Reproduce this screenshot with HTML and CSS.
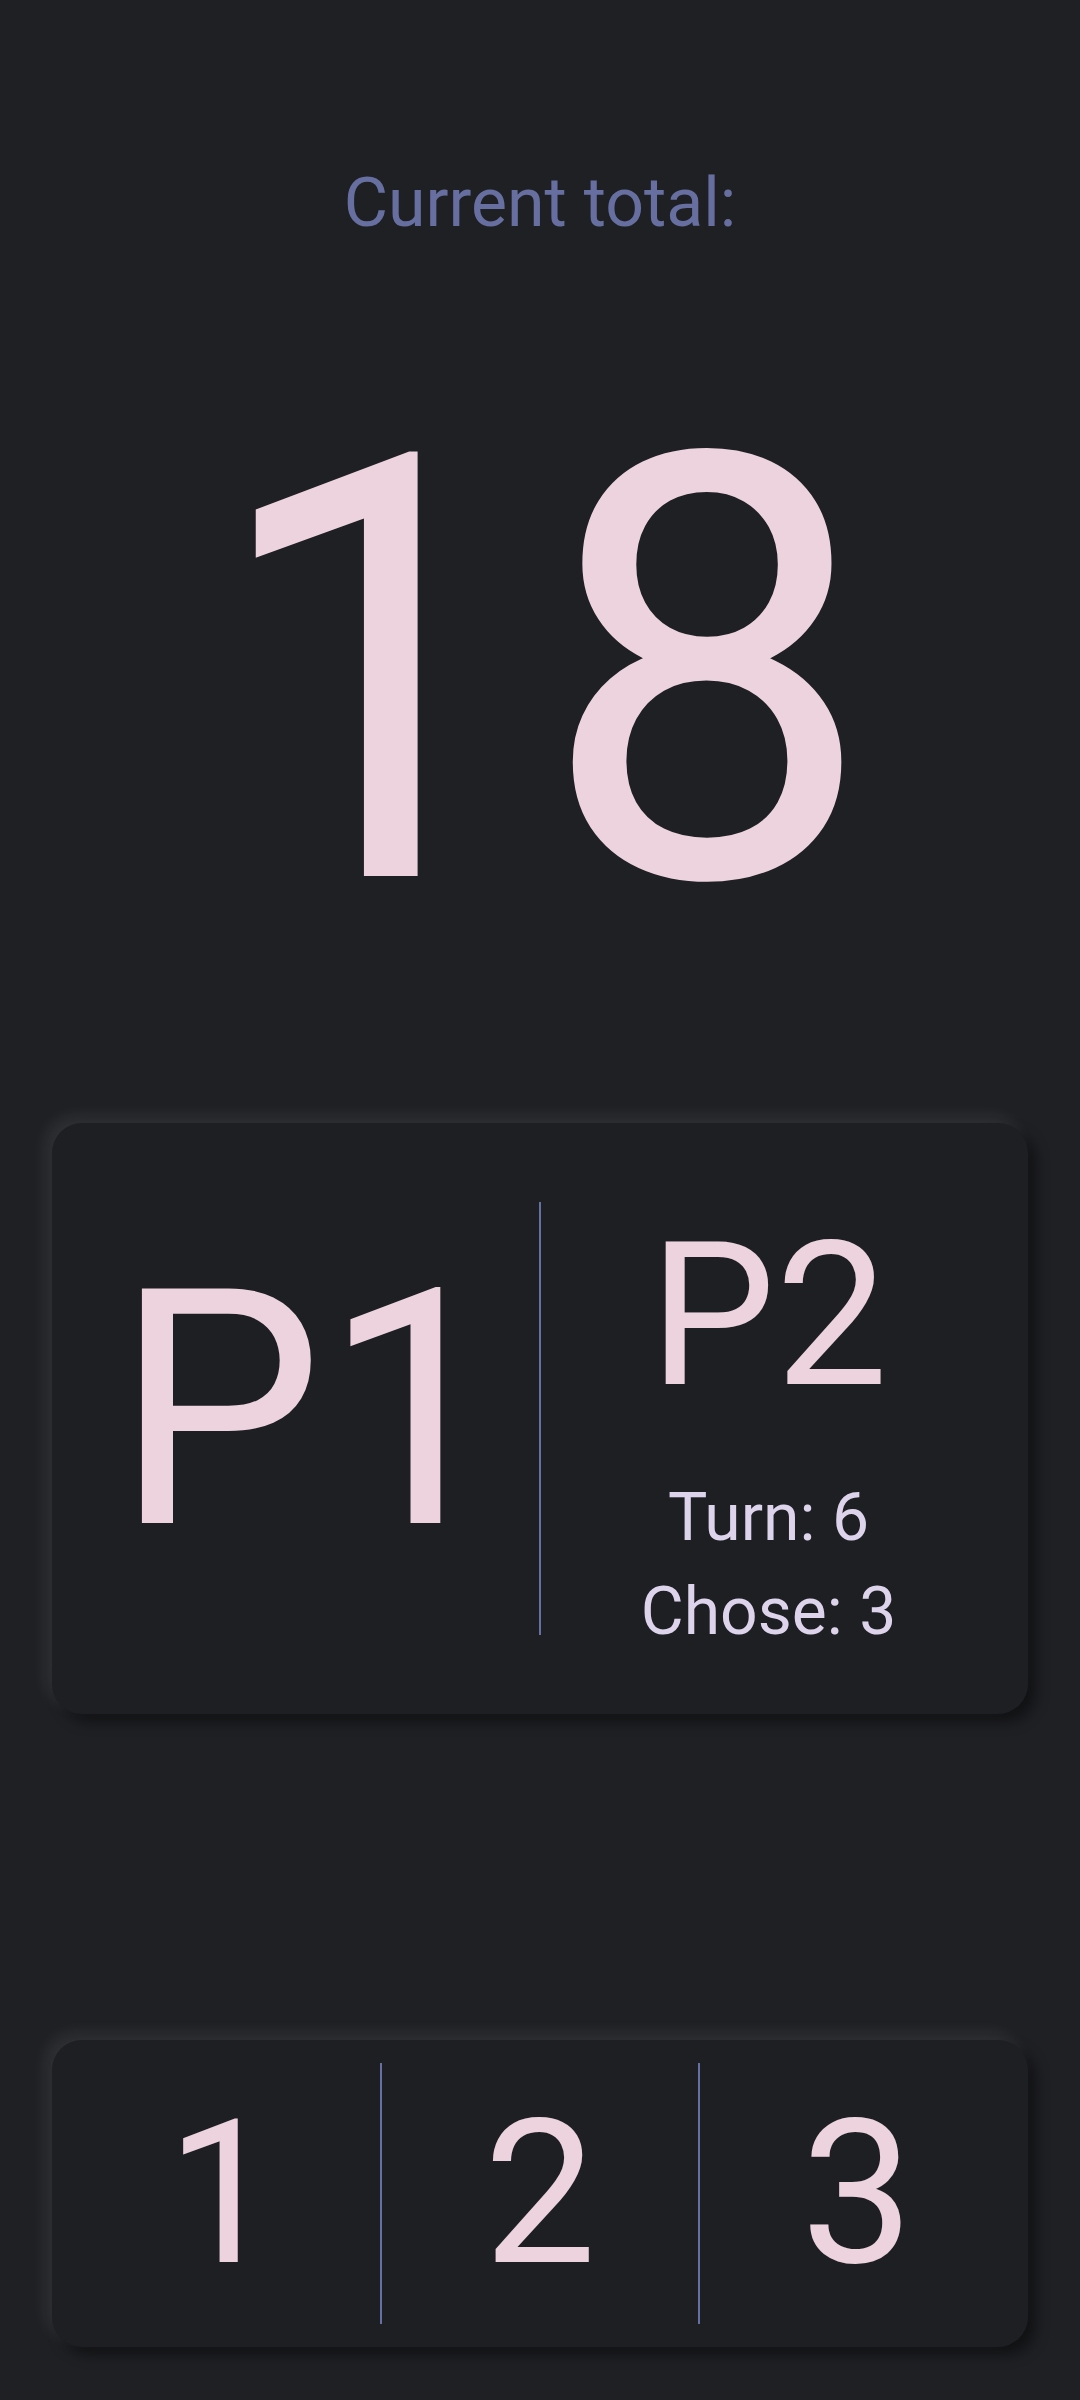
FILE: index.html
```html
<!DOCTYPE html>
<html lang="en">
<head>
<meta charset="utf-8">
<title>Current total</title>
<link rel="stylesheet" href="styles.css">
</head>
<body>
<main class="screen">
  <div class="label">Current total:</div>
  <div class="total">18</div>
  <section class="card players">
    <div class="player current">P1</div>
    <div class="vdivider tall"></div>
    <div class="player other">
      <div class="other-name">P2</div>
      <div class="info">
        <div>Turn: 6</div>
        <div>Chose: 3</div>
      </div>
    </div>
  </section>
  <section class="card choices">
    <div class="choice">1</div>
    <div class="vdivider short"></div>
    <div class="choice">2</div>
    <div class="vdivider short"></div>
    <div class="choice">3</div>
  </section>
</main>
</body>
</html>
```
FILE: styles.css
```css
html, body {
  margin: 0;
  padding: 0;
  background: #1f2024;
}
body {
  width: 1080px;
  height: 2400px;
  overflow: hidden;
  font-family: Roboto, "Noto Sans", sans-serif;
}
.screen {
  display: flex;
  flex-direction: column;
  align-items: stretch;
  padding-top: 163px;
}
.label {
  text-align: center;
  font-size: 68px;
  line-height: 80px;
  color: #666f9f;
}
.total {
  margin-top: 133px;
  text-align: center;
  font-size: 594px;
  line-height: 1;
  color: #ecd3de;
}
.card {
  margin: 0 52px;
  background: #1e1f23;
  border-radius: 30px;
  box-shadow: -7px -7px 16px rgba(255, 255, 255, 0.08), 8px 8px 14px rgba(0, 0, 0, 0.45);
  display: flex;
  align-items: center;
}
.players {
  margin-top: 153px;
  height: 591px;
  padding: 0 32px;
}
.player {
  flex: 1;
  text-align: center;
  color: #ecd3de;
}
.current {
  font-size: 330px;
  line-height: 1;
  padding-bottom: 16px;
}
.other {
  display: flex;
  flex-direction: column;
  align-items: center;
  padding-top: 38px;
}
.other-name {
  font-size: 200px;
  line-height: 1;
}
.info {
  margin-top: 55px;
  font-size: 66px;
  line-height: 94px;
  color: #ddd4ec;
}
.vdivider {
  width: 2px;
  background: #6670a2;
  flex: none;
}
.tall { height: 433px; }
.short { height: 261px; }
.choices {
  margin-top: 326px;
  height: 307px;
  padding: 0 13px;
}
.choice {
  flex: 1;
  text-align: center;
  font-size: 200px;
  line-height: 1;
  color: #ecd3de;
}
```
